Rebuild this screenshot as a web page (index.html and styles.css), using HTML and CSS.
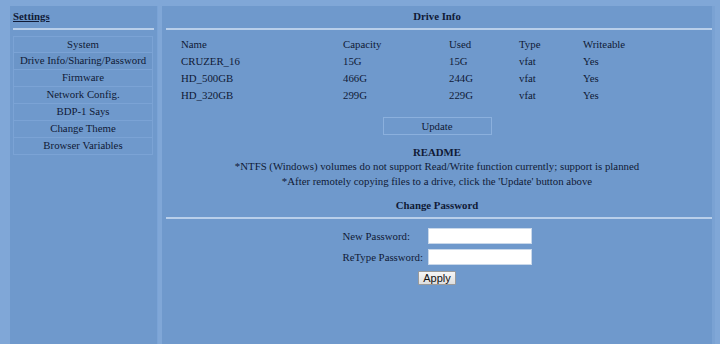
FILE: index.html
```html
<!DOCTYPE html>
<html>
<head>
<meta charset="utf-8">
<title>Settings - Drive Info</title>
<link rel="stylesheet" href="styles.css">
</head>
<body>
<div class="page">
  <div class="sidebar">
    <div class="side-head"><a class="settings-link">Settings</a></div>
    <div class="rule"></div>
    <div class="menu">
      <div class="menu-item">System</div>
      <div class="menu-item active">Drive Info/Sharing/Password</div>
      <div class="menu-item">Firmware</div>
      <div class="menu-item">Network Config.</div>
      <div class="menu-item">BDP-1 Says</div>
      <div class="menu-item">Change Theme</div>
      <div class="menu-item">Browser Variables</div>
    </div>
  </div>
  <div class="main">
    <div class="title">Drive Info</div>
    <div class="rule wide"></div>
    <div class="drives">
      <div>Name</div><div>Capacity</div><div>Used</div><div>Type</div><div>Writeable</div>
      <div>CRUZER_16</div><div>15G</div><div>15G</div><div>vfat</div><div>Yes</div>
      <div>HD_500GB</div><div>466G</div><div>244G</div><div>vfat</div><div>Yes</div>
      <div>HD_320GB</div><div>299G</div><div>229G</div><div>vfat</div><div>Yes</div>
    </div>
    <div class="update-wrap"><button class="update-btn">Update</button></div>
    <div class="readme">
      <div class="readme-title">README</div>
      <div>*NTFS (Windows) volumes do not support Read/Write function currently; support is planned</div>
      <div>*After remotely copying files to a drive, click the 'Update' button above</div>
    </div>
    <div class="title pw-title">Change Password</div>
    <div class="rule wide"></div>
    <div class="pw-form">
      <label class="pw-label">New Password:</label><input class="pw-input" type="password">
      <label class="pw-label">ReType Password:</label><input class="pw-input" type="password">
    </div>
    <div class="apply-wrap"><button class="apply-btn">Apply</button></div>
  </div>
</div>
</body>
</html>
```
FILE: styles.css
```css
html, body {
  margin: 0;
  padding: 0;
}
body {
  background: #80a7d7;
  font-family: "Liberation Serif", "Times New Roman", Times, serif;
  font-size: 10.8px;
  color: #101a36;
  width: 720px;
  height: 344px;
  overflow: hidden;
}
.page {
  display: flex;
  gap: 4px;
  padding: 6px 0 0 10px;
  height: 344px;
  box-sizing: border-box;
}
.sidebar {
  width: 148px;
  background: #6f99cc;
  padding: 0 3px;
  box-sizing: border-box;
  border-right: 1px solid #7aa3d6;
}
.main {
  width: 550px;
  background: #6f99cc;
  border-right: 3px solid #7aa2d3;
  box-sizing: content-box;
}
.side-head {
  height: 22px;
  padding-top: 3px;
  box-sizing: border-box;
  line-height: 14px;
}
.settings-link {
  font-weight: bold;
  text-decoration: underline;
  color: #101a36;
}
.rule {
  height: 2px;
  background: #b9cfea;
}
.rule.wide {
  margin-left: 4px;
}
.menu {
  margin-top: 6px;
  margin-right: 1px;
  display: flex;
  flex-direction: column;
}
.menu-item {
  height: 17px;
  line-height: 15px;
  text-align: center;
  border: 1px solid #7ba3d5;
  border-top: none;
  box-sizing: border-box;
}
.menu-item:first-child {
  border-top: 1px solid #7ba3d5;
}
.menu-item.active {
  background: #6b95c8;
}
.title {
  height: 22px;
  padding-top: 3px;
  box-sizing: border-box;
  line-height: 14px;
  text-align: center;
  font-weight: bold;
}
.drives {
  display: grid;
  grid-template-columns: 162px 106px 70px 64px 80px;
  grid-auto-rows: 17px;
  align-items: center;
  padding-left: 19px;
  margin-top: 5px;
  line-height: 14px;
}
.update-wrap {
  display: flex;
  justify-content: center;
  margin-top: 14px;
}
.update-btn {
  width: 109px;
  height: 18px;
  background: transparent;
  border: 1px solid #8bb0dd;
  font-family: inherit;
  font-size: 10.8px;
  color: #101a36;
  padding: 0;
}
.readme {
  text-align: center;
  line-height: 15px;
  margin-top: 10px;
}
.readme-title {
  font-weight: bold;
  line-height: 14px;
}
.pw-title {
  height: 28px;
  padding-top: 9px;
}
.pw-form {
  display: grid;
  grid-template-columns: 85px 104px;
  row-gap: 5px;
  justify-content: center;
  align-items: center;
  margin-top: 9px;
}
.pw-label {
  line-height: 14px;
}
.pw-input {
  width: 104px;
  height: 16px;
  box-sizing: border-box;
  border: 1px solid #c9d8ea;
  background: #ffffff;
  margin: 0;
  padding: 0;
}
.apply-wrap {
  display: flex;
  justify-content: center;
  margin-top: 6px;
}
.apply-btn {
  width: 38px;
  height: 14px;
  padding: 0;
  font-family: "Liberation Sans", Arial, sans-serif;
  font-size: 11px;
  line-height: 12px;
  color: #111;
  border: 1px solid #9a9a9a;
  border-radius: 1px;
  background: linear-gradient(#f6f6f6, #dedede);
}
```
